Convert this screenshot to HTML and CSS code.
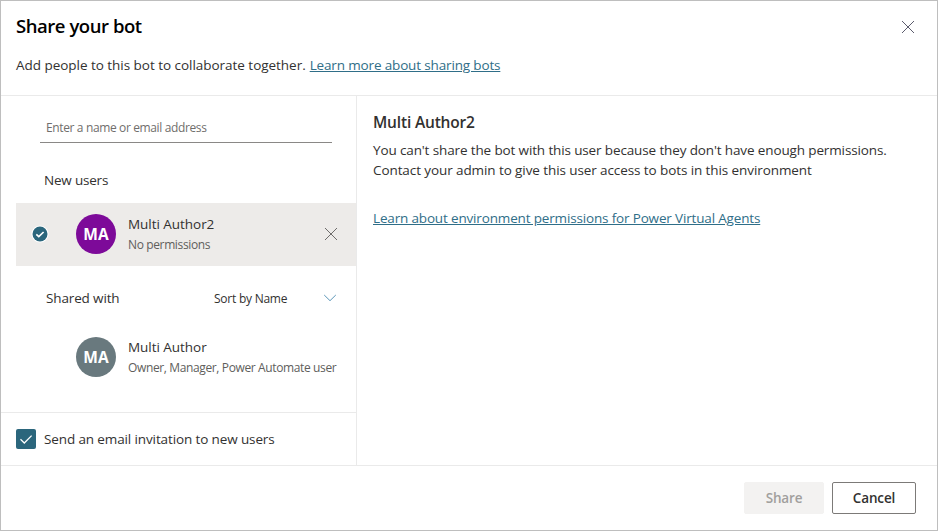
FILE: index.html
```html
<!DOCTYPE html>
<html lang="en">
<head>
<meta charset="utf-8">
<title>Share your bot</title>
<link rel="stylesheet" href="styles.css">
</head>
<body>
<main class="dialog">
  <header class="header">
    <div class="title-row">
      <h1 class="title">Share your bot</h1>
      <svg class="close" width="14" height="14" viewBox="0 0 14 14"><path d="M1 1L13 13M13 1L1 13"/></svg>
    </div>
    <p class="intro"><span class="intro-text">Add people to this bot to collaborate together.</span><a class="link intro-link">Learn more about sharing bots</a></p>
  </header>
  <div class="body">
    <section class="people">
      <div class="search">Enter a name or email address</div>
      <h2 class="group">New users</h2>
      <div class="user selected">
        <svg class="tick" width="18" height="18" viewBox="0 0 18 18"><circle class="tick-ring" cx="9" cy="9" r="8.6"/><circle class="tick-disc" cx="9" cy="9" r="7.5"/><path class="tick-mark" d="M5.3 9.3L7.8 11.6L12.6 7"/></svg>
        <div class="avatar purple">MA</div>
        <div class="who"><div class="name">Multi Author2</div><div class="role">No permissions</div></div>
        <svg class="remove" width="14" height="14" viewBox="0 0 14 14"><path d="M1 1L13 13M13 1L1 13"/></svg>
      </div>
      <div class="shared-head">
        <h2 class="shared">Shared with</h2>
        <div class="sort">Sort by Name</div>
        <svg class="chevron" width="14" height="8" viewBox="0 0 14 8"><path d="M1.2 1L7 6.7L12.8 1"/></svg>
      </div>
      <div class="user owner">
        <div class="avatar grey">MA</div>
        <div class="who"><div class="name">Multi Author</div><div class="role">Owner, Manager, Power Automate user</div></div>
      </div>
      <div class="invite">
        <svg class="checkbox" width="20" height="20" viewBox="0 0 20 20"><rect width="20" height="20" rx="2"/><path d="M4.5 10.3L8.3 14L15.6 6.6"/></svg>
        <span class="invite-text">Send an email invitation to new users</span>
      </div>
    </section>
    <section class="detail">
      <h2 class="detail-title">Multi Author2</h2>
      <p class="message">You can't share the bot with this user because they don't have enough permissions.<br><span class="contact">Contact your admin to give this user access to bots in this environment</span></p>
      <a class="link detail-link">Learn about environment permissions for Power Virtual Agents</a>
    </section>
  </div>
  <footer class="footer">
    <button class="btn disabled">Share</button>
    <button class="btn">Cancel</button>
  </footer>
</main>
</body>
</html>
```
FILE: styles.css
```css
* { box-sizing: border-box; }
body { margin: 0; background: #fff; color: #323130; font: 13.5px/20px "Open Sans", "Noto Sans", sans-serif; }
h1, h2, p { margin: 0; font-weight: 400; font-size: inherit; }
svg { display: block; flex: none; fill: none; }
.dialog { width: 938px; height: 531px; border: 1px solid #bebebe; display: flex; flex-direction: column; white-space: nowrap; }
.header { height: 95px; border-bottom: 1px solid #eaeaea; padding: 11px 22px 0 15px; flex: none; }
.title-row { display: flex; justify-content: space-between; align-items: center; height: 30px; }
.title { font-size: 18.5px; line-height: 28px; padding-bottom: 2px; font-weight: 600; letter-spacing: -0.45px; color: #000; }
.close { stroke: #4a4a5c; stroke-width: 0.9; }
.intro { display: flex; gap: 4px; margin-top: 13px; }
.intro-text { letter-spacing: -0.03px; }
.link { color: #2f6e88; text-decoration: underline; text-underline-offset: 1px; }
.intro-link { letter-spacing: -0.15px; }
.body { display: flex; height: 370px; flex: none; border-bottom: 1px solid #eaeaea; }
.people { width: 356px; border-right: 1px solid #eaeaea; display: flex; flex-direction: column; flex: none; }
.search { margin: 16px 24px 0 39px; height: 31px; border-bottom: 1px solid #8a8886; padding: 6px 6px 0; font-size: 12px; letter-spacing: -0.37px; color: #706e6c; flex: none; }
.group { margin: 27px 0 13px 43px; letter-spacing: -0.2px; flex: none; }
.user { display: flex; align-items: center; height: 63px; margin-left: 15px; padding-left: 60px; flex: none; }
.selected { background: #edebe9; padding: 0 18px 1px 15px; }
.tick { margin-right: 27px; }
.tick-ring { fill: #fff; }
.tick-disc { fill: #2b667c; }
.tick-mark { stroke: #fff; stroke-width: 1.7; }
.avatar { width: 40px; height: 40px; border-radius: 50%; color: #fff; font-size: 15.5px; font-weight: 700; line-height: 41px; text-align: center; flex: none; }
.purple { background: #7d0a99; }
.grey { background: #69797e; }
.who { margin-left: 12px; flex: 1; }
.name { line-height: 20px; letter-spacing: -0.04px; }
.role { line-height: 21px; font-size: 12px; letter-spacing: -0.37px; color: #605e5c; }
.remove { stroke: #605e5c; stroke-width: 0.9; }
.shared-head { display: flex; align-items: center; height: 20px; margin: 22px 19px 0 45px; flex: none; }
.shared { width: 168px; letter-spacing: -0.14px; }
.sort { flex: 1; font-size: 12px; letter-spacing: -0.24px; line-height: 18px; padding-top: 2px; }
.chevron { stroke: #4a8ab0; stroke-width: 0.9; }
.owner { margin-top: 17px; }
.owner .who { padding-top: 2px; }
.invite { display: flex; align-items: center; gap: 8px; margin-top: auto; height: 53px; border-top: 1px solid #eaeaea; padding-left: 15px; flex: none; }
.invite-text { letter-spacing: -0.12px; }
.checkbox rect { fill: #2b667c; }
.checkbox path { stroke: #fff; stroke-width: 1.3; }
.detail { padding: 15px 16px 0; flex: 1; }
.detail-title { font-size: 15.5px; font-weight: 600; line-height: 22px; letter-spacing: -0.17px; }
.message { margin-top: 7px; letter-spacing: -0.13px; }
.contact { letter-spacing: -0.09px; }
.detail-link { display: inline-block; margin-top: 28px; letter-spacing: -0.16px; }
.footer { flex: 1; display: flex; justify-content: flex-end; gap: 8px; padding: 16px 21px 0 0; }
.btn { width: 84px; height: 32px; border: 1px solid #7c7a78; border-radius: 2px; background: #fff; color: #323130; font: 600 13.5px/20px "Open Sans", "Noto Sans", sans-serif; letter-spacing: -0.15px; padding: 0; }
.disabled { width: 80px; background: #f3f2f1; border-color: #f3f2f1; color: #a19f9d; }
```
